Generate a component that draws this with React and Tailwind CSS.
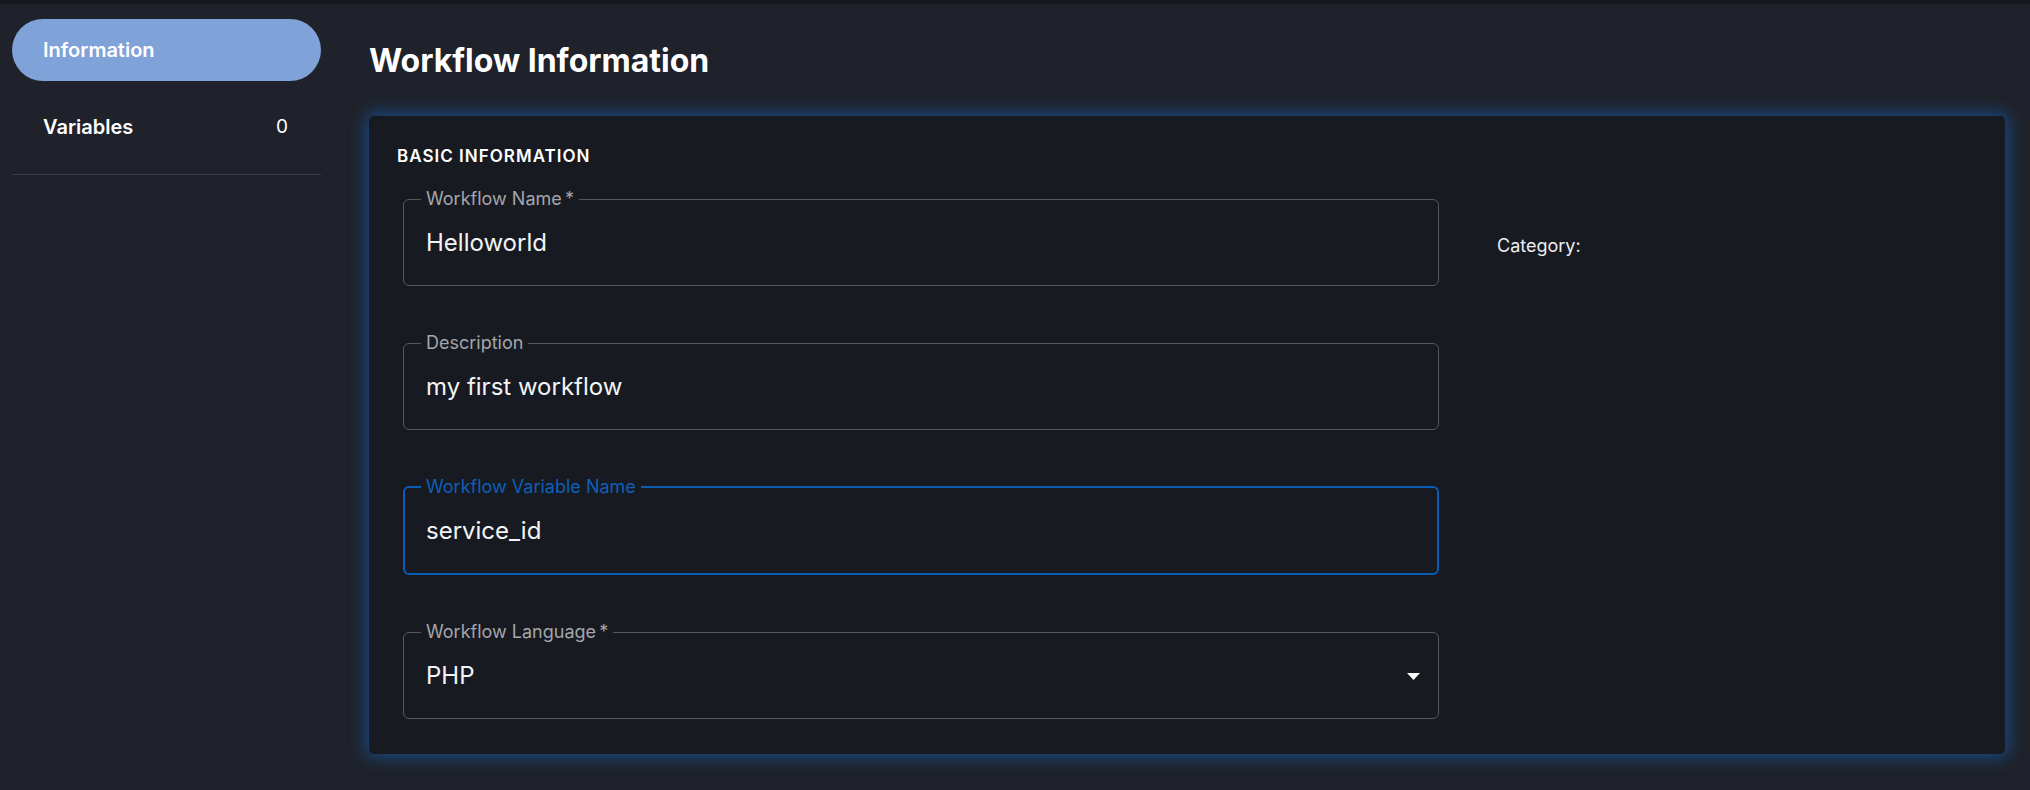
import { useState } from 'react';

const fields = [
  { id: 'name', label: 'Workflow Name', required: true, value: 'Helloworld' },
  { id: 'description', label: 'Description', value: 'my first workflow' },
  { id: 'variable', label: 'Workflow Variable Name', value: 'service_id', focused: true },
  { id: 'language', label: 'Workflow Language', required: true, value: 'PHP', select: true },
];

function OutlinedField({ field }) {
  const border = field.focused
    ? 'border-2 border-[#0b5cb3]'
    : 'border border-[#55585e]';
  const labelColor = field.focused ? 'text-[#0d5fb8]' : 'text-[#a3a6ab]';

  return (
    <fieldset
      className={`${border} rounded-[6px] ${field.focused ? 'px-[21px]' : 'px-[22px]'} pt-[18px] pb-[25px] min-w-0`}
    >
      <legend className={`-ml-[5px] px-[5px] text-[18px] leading-[18px] ${labelColor}`}>
        {field.label}
        {field.required && <span>&thinsp;*</span>}
      </legend>
      <div className="flex items-center justify-between h-[34px]">
        <span className="text-[24px] leading-[34px] text-[#f3f4f6]">{field.value}</span>
        {field.select && (
          <svg width="13" height="7" viewBox="0 0 13 7" className="-mr-[4px]">
            <polygon points="0,0 13,0 6.5,7" fill="#ffffff" />
          </svg>
        )}
      </div>
    </fieldset>
  );
}

export default function App() {
  const [activeTab, setActiveTab] = useState('information');

  return (
    <div
      className="min-h-screen bg-[#1f222a] text-white"
      style={{ fontFamily: 'Inter, "Noto Sans", sans-serif' }}
    >
      <div className="h-[4px] bg-[#16181d]" />
      <div className="flex">
        {/* Barre latérale */}
        <aside className="w-[333px] shrink-0 px-[12px] pt-[15px]">
          <button
            onClick={() => setActiveTab('information')}
            className={`w-full h-[62px] rounded-full flex items-center pl-[31px] text-[20px] leading-[28px] font-semibold ${
              activeTab === 'information' ? 'bg-[#7fa2d8]' : ''
            }`}
          >
            Information
          </button>
          <button
            onClick={() => setActiveTab('variables')}
            className={`w-full h-[62px] mt-[15px] rounded-full flex items-center justify-between pl-[31px] pr-[33px] text-[20px] leading-[28px] ${
              activeTab === 'variables' ? 'bg-[#7fa2d8]' : ''
            }`}
          >
            <span className="font-semibold">Variables</span>
            <span className="text-[19px]">0</span>
          </button>
          <div className="mt-[16px] h-px bg-[#3a3d45]" />
        </aside>

        {/* Contenu principal */}
        <main className="flex-1 pl-[36px] pr-[25px] pt-[37px]">
          <h1 className="text-[32px] leading-[40px] font-bold">Workflow Information</h1>

          <section className="mt-[35px] bg-[#171a21] rounded-[5px] shadow-[0_0_16px_4px_rgba(20,96,180,0.6)] pl-[28px] pr-[28px] pt-[30px] pb-[35px]">
            <h2 className="text-[17px] leading-[20px] font-semibold tracking-[0.06em] uppercase">
              Basic Information
            </h2>
            <div className="flex mt-[24px]">
              <div className="w-[1042px] pl-[6px] flex flex-col gap-[48px]">
                {fields.map((field) => (
                  <OutlinedField key={field.id} field={field} />
                ))}
              </div>
              <div className="ml-[58px] mt-[44px] text-[18px] leading-[24px] text-[#eceef1]">
                Category:
              </div>
            </div>
          </section>
        </main>
      </div>
    </div>
  );
}
